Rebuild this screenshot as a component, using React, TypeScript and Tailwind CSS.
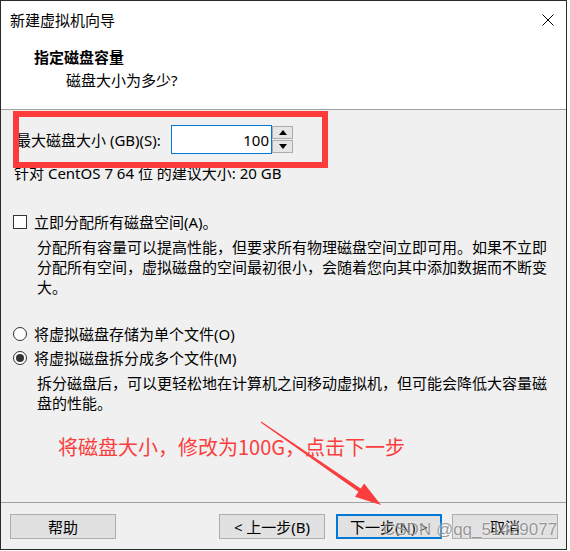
const cjk = "font-['Noto_Sans','Noto_Sans_CJK_SC','Microsoft_YaHei',sans-serif]";

function Btn({ label, primary }: { label: string; primary?: boolean }) {
  return (
    <div
      className={
        primary
          ? 'flex h-[25px] w-[106px] items-center justify-center border-2 border-[#0078d7] bg-[#e1e1e1]'
          : 'flex h-[25px] w-[106px] items-center justify-center border border-[#adadad] bg-[#e1e1e1]'
      }
    >
      {label}
    </div>
  );
}

function Radio({ checked }: { checked?: boolean }) {
  return (
    <div className="flex h-[14px] w-[14px] items-center justify-center rounded-full border border-[#333] bg-white">
      {checked && <div className="h-[8px] w-[8px] rounded-full bg-[#333]" />}
    </div>
  );
}

export default function App() {
  return (
    <div className={`relative h-[551px] w-[570px] bg-white text-[15px] leading-[20px] text-black ${cjk}`}>
      <div className="flex h-[550px] w-[567px] flex-col border border-[#2b2b2b] bg-[#f0f0f0]">
        {/* title bar */}
        <div className="flex h-[37px] items-center justify-between bg-white pl-[9px] pr-[12px]">
          <span>新建虚拟机向导</span>
          <svg width="12" height="12" viewBox="0 0 12 12">
            <path d="M0.5 0.5L11.5 11.5M11.5 0.5L0.5 11.5" stroke="#000" strokeWidth="1" />
          </svg>
        </div>

        {/* header */}
        <div className="h-[72px] border-b border-[#a0a0a0] bg-white pl-[33px] pt-[9px]">
          <div className="font-bold">指定磁盘容量</div>
          <div className="mt-[3px] pl-[32px]">磁盘大小为多少?</div>
        </div>

        {/* body */}
        <div className="flex flex-1 flex-col pl-[12px] pt-[15px]">
          <div className="ml-[3px] flex items-center">
            <span className="w-[155px] whitespace-nowrap">最大磁盘大小 (GB)(S):</span>
            <div className="flex h-[29px] w-[101px] items-center justify-end border border-[#0078d7] bg-white pr-[2px]">
              100
            </div>
            <div className="flex h-[29px] w-[21px] flex-col justify-between py-[1px]">
              <div className="flex h-[13px] items-center justify-center border border-[#adadad] bg-[#e5e5e5]">
                <svg width="8" height="5" viewBox="0 0 8 5">
                  <path d="M4 0L8 5H0Z" fill="#000" />
                </svg>
              </div>
              <div className="flex h-[13px] items-center justify-center border border-[#adadad] bg-[#e5e5e5]">
                <svg width="8" height="5" viewBox="0 0 8 5">
                  <path d="M0 0H8L4 5Z" fill="#000" />
                </svg>
              </div>
            </div>
          </div>
          <div className="ml-[1px] mt-[9px]">针对 CentOS 7 64 位 的建议大小: 20 GB</div>

          <div className="mt-[29px] flex items-center gap-[7px]">
            <div className="h-[14px] w-[14px] border border-[#333] bg-white" />
            <span>立即分配所有磁盘空间(A)。</span>
          </div>
          <div className="mt-[5px] whitespace-nowrap pl-[24px]">
            分配所有容量可以提高性能，但要求所有物理磁盘空间立即可用。如果不立即
            <br />
            分配所有空间，虚拟磁盘的空间最初很小，会随着您向其中添加数据而不断变
            <br />
            大。
          </div>

          <div className="mt-[27px] flex items-center gap-[7px]">
            <Radio />
            <span>将虚拟磁盘存储为单个文件(O)</span>
          </div>
          <div className="mt-[4px] flex items-center gap-[7px]">
            <Radio checked />
            <span>将虚拟磁盘拆分成多个文件(M)</span>
          </div>
          <div className="mt-[5px] whitespace-nowrap pl-[24px]">
            拆分磁盘后，可以更轻松地在计算机之间移动虚拟机，但可能会降低大容量磁
            <br />
            盘的性能。
          </div>
        </div>

        {/* footer */}
        <div className="flex h-[47px] border-t border-[#a0a0a0] pl-[9px] pr-[8px] pt-[11px]">
          <Btn label="帮助" />
          <div className="ml-auto flex gap-[11px]">
            <Btn label="< 上一步(B)" />
            <div className="flex gap-[10px]">
              <Btn label="下一步(N) >" primary />
              <Btn label="取消" />
            </div>
          </div>
        </div>
      </div>

      {/* annotation overlays */}
      <div className="pointer-events-none absolute left-[13px] top-[111px] h-[57px] w-[315px] border-[6px] border-[#fd3b3b]" />
      <div className="pointer-events-none absolute left-[58px] top-[435px] whitespace-nowrap font-['Noto_Sans_CJK_SC',sans-serif] text-[20px] leading-[24px] text-[#fa3e3e]">
        将磁盘大小，修改为100G，点击下一步
      </div>
      <svg className="pointer-events-none absolute left-0 top-0" width="570" height="551">
        <polygon
          points="261.3,421.6 360.7,488.6 364.2,483.6 381,505 355,496.8 358.5,491.8 260.7,422.4"
          fill="#fa3e3e"
        />
      </svg>
      <div className="pointer-events-none absolute left-[383px] top-[519px] whitespace-nowrap font-['Liberation_Sans',sans-serif] text-[17px] leading-[22px] text-[rgba(110,110,110,0.7)] [text-shadow:0_0_2px_#fff]">
        CSDN @qq_51429077
      </div>
    </div>
  );
}
